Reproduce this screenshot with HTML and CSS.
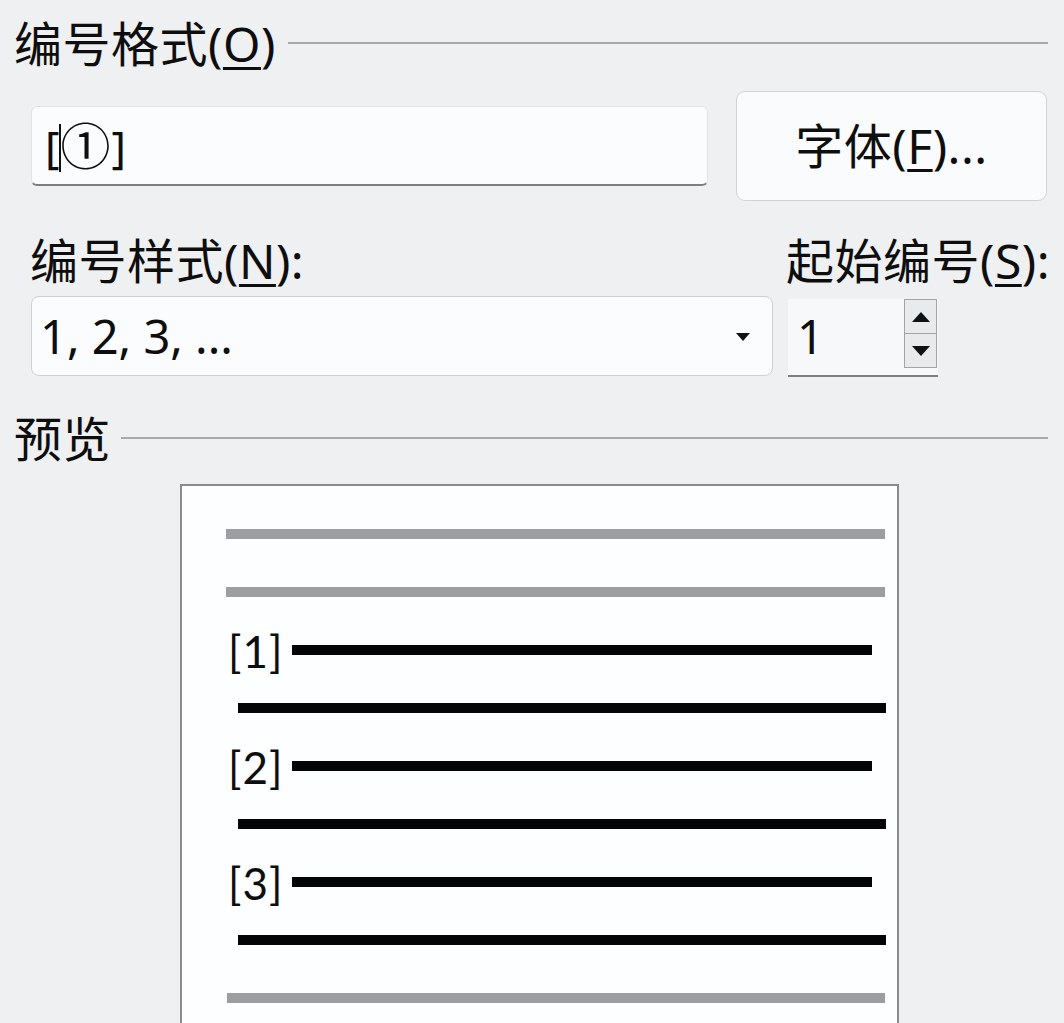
FILE: index.html
```html
<!DOCTYPE html>
<html lang="zh-CN">
<head>
<meta charset="utf-8">
<title>编号格式</title>
<link rel="stylesheet" href="styles.css">
</head>
<body>
<div class="page">
  <div class="section-head head-format">
    <span class="head-text">编号格式(<u>O</u>)</span>
    <span class="head-line"></span>
  </div>

  <div class="row-format">
    <div class="text-field"><span>[</span><span class="caret"></span><span class="circ">①</span><span>]</span></div>
    <button class="btn">字体(<u>F</u>)...</button>
  </div>

  <div class="grid-style">
    <div class="label">编号样式(<u>N</u>):</div>
    <div class="label label-start">起始编号(<u>S</u>):</div>
    <div class="combo">
      <span>1, 2, 3, ...</span>
      <svg class="combo-arrow" width="14" height="8" viewBox="0 0 14 8"><path d="M0 0 H14 L7 8 Z" fill="#111"/></svg>
    </div>
    <div class="spin">
      <span class="spin-value">1</span>
      <div class="spin-btns">
        <div class="spin-btn"><svg width="18" height="10" viewBox="0 0 18 10"><path d="M9 0 L18 10 H0 Z" fill="#111"/></svg></div>
        <div class="spin-btn"><svg width="18" height="10" viewBox="0 0 18 10"><path d="M0 0 H18 L9 10 Z" fill="#111"/></svg></div>
      </div>
    </div>
  </div>

  <div class="section-head head-preview">
    <span class="head-text">预览</span>
    <span class="head-line"></span>
  </div>

  <div class="preview">
    <div class="pv-row pv-gray"><span class="bar gray"></span></div>
    <div class="pv-row pv-gray"><span class="bar gray"></span></div>
    <div class="pv-row pv-num"><span class="num">[1]</span><span class="bar black short"></span></div>
    <div class="pv-row pv-full"><span class="bar black"></span></div>
    <div class="pv-row pv-num"><span class="num">[2]</span><span class="bar black short"></span></div>
    <div class="pv-row pv-full"><span class="bar black"></span></div>
    <div class="pv-row pv-num"><span class="num">[3]</span><span class="bar black short"></span></div>
    <div class="pv-row pv-full"><span class="bar black"></span></div>
    <div class="pv-row pv-gray pv-last"><span class="bar gray"></span></div>
  </div>
</div>
</body>
</html>
```

FILE: styles.css
```css
html, body {
  margin: 0;
  padding: 0;
  background: #eff0f2;
  overflow: hidden;
}

body {
  width: 1064px;
  height: 1023px;
  font-family: "Noto Sans", "Noto Sans CJK SC", sans-serif;
  color: #0e0e0e;
}

u {
  text-decoration-thickness: 3px;
  text-underline-offset: 5px;
}

.page {
  padding: 18px 16px 0 14px;
}

.section-head {
  display: flex;
  align-items: center;
  height: 52px;
  gap: 12px;
}

.head-text {
  font-size: 48px;
  line-height: 52px;
  white-space: nowrap;
  letter-spacing: 0.5px;
}

.head-line {
  flex: 1;
  height: 2px;
  background: #a8a9ab;
  margin-top: -2px;
}

.head-preview {
  margin-top: 37px;
  gap: 10px;
}

.row-format {
  display: flex;
  align-items: center;
  margin: 21px 0 0 17px;
  gap: 28px;
  height: 110px;
}

.text-field {
  width: 677px;
  height: 80px;
  box-sizing: border-box;
  background: #fbfcfd;
  border: 1px solid #e2e3e5;
  border-bottom: 2px solid #7d7e80;
  border-radius: 6px;
  display: flex;
  align-items: center;
  padding-left: 13px;
  font-size: 44px;
  line-height: 1;
}

.circ {
  font-size: 50px;
  margin: 0 1px;
}

.caret {
  display: inline-block;
  width: 0;
  height: 48px;
  border-left: 2px solid #111;
  margin: 4px -2px 0 0;
}

.btn {
  width: 311px;
  height: 110px;
  box-sizing: border-box;
  background: #fafbfc;
  border: 1px solid #d2d3d5;
  border-radius: 9px;
  font-family: "Noto Sans", "Noto Sans CJK SC", sans-serif;
  font-size: 48px;
  letter-spacing: 0.5px;
  color: #0e0e0e;
  padding: 0 0 6px 0;
}

.grid-style {
  display: grid;
  grid-template-columns: 742px 150px;
  grid-template-rows: 56px 80px;
  column-gap: 15px;
  row-gap: 7px;
  margin: 32px 0 0 17px;
}

.label {
  font-size: 48px;
  line-height: 56px;
  letter-spacing: 0.5px;
  white-space: nowrap;
  margin-left: -1px;
}

.label-start {
  margin-left: -2px;
}

.combo {
  box-sizing: border-box;
  height: 80px;
  background: #fbfcfd;
  border: 1px solid #cfd0d2;
  border-radius: 8px;
  display: flex;
  align-items: center;
  justify-content: space-between;
  padding: 0 22px 0 8px;
  font-size: 47px;
}

.combo-arrow {
  margin-top: 2px;
}

.spin {
  box-sizing: border-box;
  height: 78px;
  margin-top: 3px;
  background: #f7f8fa;
  border-bottom: 2px solid #7d7e80;
  display: flex;
  align-items: flex-start;
  justify-content: space-between;
  padding: 0 1px 0 9px;
}

.spin-value {
  font-size: 47px;
  line-height: 74px;
}

.spin-btns {
  width: 33px;
  height: 69px;
  box-sizing: border-box;
  border: 1px solid #a3a4a6;
  display: flex;
  flex-direction: column;
  background: #e9eaec;
}

.spin-btn {
  flex: 1;
  display: flex;
  align-items: center;
  justify-content: center;
}

.spin-btn + .spin-btn {
  border-top: 1px solid #a3a4a6;
}

.preview {
  margin: 19px 0 0 166px;
  width: 719px;
  height: 620px;
  box-sizing: border-box;
  background: #fdfeff;
  border: 2px solid #8a8b8d;
  padding-top: 19px;
}

.pv-row {
  height: 58px;
  display: flex;
  align-items: center;
}

.pv-gray {
  padding-left: 44px;
}

.pv-last {
  padding-left: 45px;
}

.pv-num {
  padding-left: 46px;
}

.pv-full {
  padding-left: 56px;
}

.bar {
  display: block;
  height: 10px;
}

.bar.gray {
  width: 659px;
  background: #9d9ea1;
}

.pv-last .bar.gray {
  width: 658px;
}

.bar.black {
  width: 648px;
  background: #050508;
}

.bar.black.short {
  width: 580px;
}

.num {
  font-family: "Lato", "Open Sans", sans-serif;
  font-size: 44px;
  letter-spacing: 1px;
  width: 64px;
  line-height: 44px;
  margin-top: 2px;
}
```
